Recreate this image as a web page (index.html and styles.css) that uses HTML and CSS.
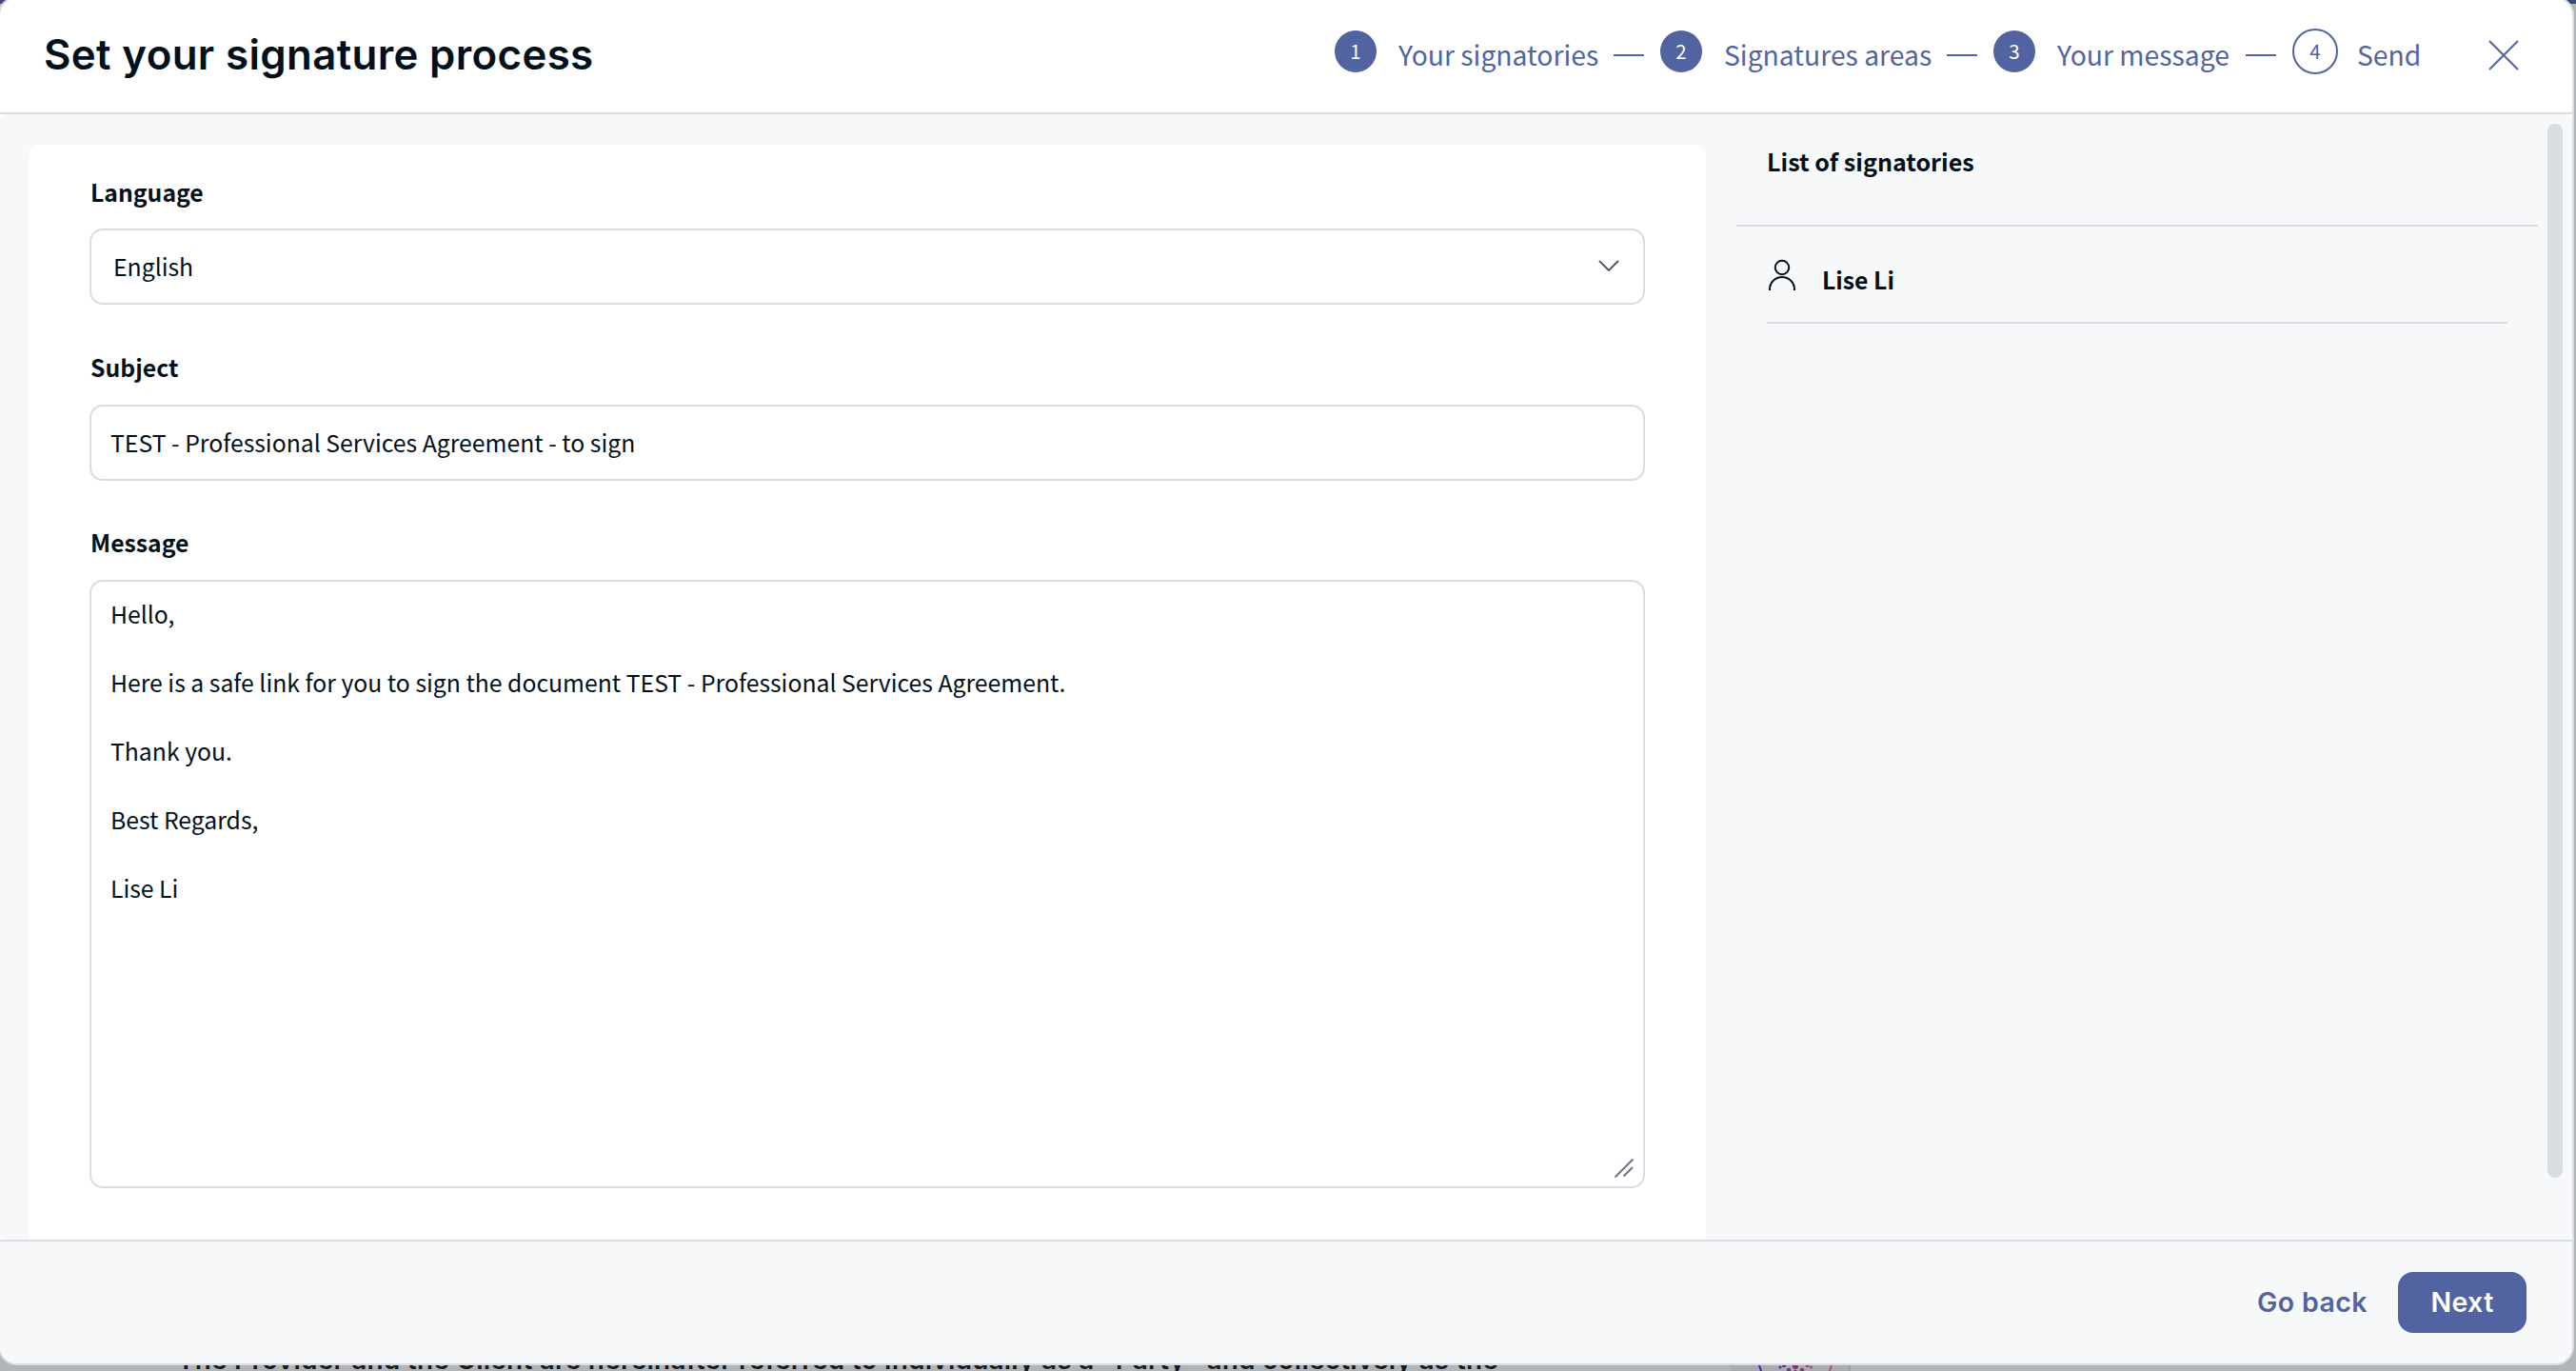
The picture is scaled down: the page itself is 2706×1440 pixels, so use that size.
FILE: index.html
```html
<!DOCTYPE html>
<html lang="en">
<head>
<meta charset="utf-8">
<title>Set your signature process</title>
<link rel="stylesheet" href="styles.css">
</head>
<body>
<div class="backdrop">
  <div class="topbar"></div>
  <p class="doc-text"><span>The Provider and the Client are hereinafter referred to individually as a "Party" and collectively as the</span></p>
  <svg class="doc-badge" width="126" height="6" viewBox="0 0 126 6">
    <rect width="126" height="6" fill="#a8acb0"/>
    <rect x="124" width="2" height="6" fill="#9b9fa8"/>
    <path d="M30 0l2 6" stroke="#5c12a6" stroke-width="2"/>
    <path d="M106 0l-2 6" stroke="#b5525c" stroke-width="2"/>
    <g fill="#86307c"><circle cx="52" cy="2" r="1.5" fill="#70208c"/><circle cx="56" cy="0" r="2.2" fill="#70208c"/><circle cx="61" cy="5" r="2.2"/><circle cx="68" cy="1" r="3"/><circle cx="68" cy="6" r="1.5"/><circle cx="75" cy="5" r="2.2"/><circle cx="80.500" cy="0" r="2.200" fill="#a5486a"/><circle cx="84.500" cy="2" r="1.500" fill="#a5486a"/></g>
  </svg>
</div>
<main class="modal">
  <header class="header">
    <h1 class="title">Set your signature process</h1>
    <ol class="steps">
      <li class="step"><span class="num">1</span><span class="name n1">Your signatories</span></li>
      <li class="dash"></li>
      <li class="step"><span class="num">2</span><span class="name n2">Signatures areas</span></li>
      <li class="dash"></li>
      <li class="step"><span class="num">3</span><span class="name n3">Your message</span></li>
      <li class="dash"></li>
      <li class="step"><span class="num open">4</span><span class="name n4">Send</span></li>
    </ol>
    <svg class="close" width="32" height="32" viewBox="0 0 32 32"><path d="M1 1l30 30M31 1L1 31" stroke="#5163a0" stroke-width="2" fill="none"/></svg>
  </header>
  <div class="content">
    <section class="card">
      <div class="field">
        <div class="label">Language</div>
        <div class="box select"><span>English</span>
          <svg width="22" height="14" viewBox="0 0 22 14"><path d="M1 2l10 10L21 2" stroke="#46525f" stroke-width="1.8" fill="none"/></svg>
        </div>
      </div>
      <div class="field">
        <div class="label">Subject</div>
        <div class="box"><span>TEST - Professional Services Agreement - to sign</span></div>
      </div>
      <div class="field">
        <div class="label">Message</div>
        <div class="box area">Hello,

Here is a safe link for you to sign the document TEST - Professional Services Agreement.

Thank you.

Best Regards,

Lise Li<svg class="grip" width="22" height="22" viewBox="0 0 22 22"><path d="M1.500 20.500l19-19M10.500 19.500l9.500-9.500" stroke="#6b7488" stroke-width="2" fill="none"/></svg></div>
      </div>
    </section>
    <aside class="side">
      <h2 class="side-title">List of signatories</h2>
      <div class="person">
        <svg width="30" height="34" viewBox="0 0 30 34"><g stroke="#02101a" stroke-width="2" fill="none"><circle cx="15" cy="9" r="7.200"/><path d="M2 33v-1a13 13 0 0 1 26 0v1"/></g></svg>
        <span>Lise Li</span>
      </div>
    </aside>
    <div class="scroll"></div>
  </div>
  <footer class="footer">
    <button class="back">Go back</button>
    <button class="next">Next</button>
  </footer>
</main>
</body>
</html>
```

FILE: styles.css
```css
* { box-sizing: border-box; }
body {
  margin: 0;
  width: 2706px;
  height: 1440px;
  overflow: hidden;
  position: relative;
  background: #b1b5b8;
  color: #02101a;
  font: 24.77px/36px "Noto Sans CJK SC", "Noto Sans", sans-serif;
}
h1, h2, p, ol { margin: 0; padding: 0; }
.backdrop { position: absolute; inset: 0; }
.topbar { height: 4px; background: #3c4876; }
.doc-text {
  position: absolute;
  left: 186px;
  top: 1408px;
  font: 600 28px/40px Inter, sans-serif;
  letter-spacing: 0.22px;
  white-space: nowrap;
  color: #14191d;
}
.doc-badge { position: absolute; left: 1818px; top: 1434px; }
.modal {
  position: absolute;
  left: -2px;
  top: -4px;
  width: 2706px;
  height: 1438px;
  border: 2px solid #d9dce1;
  border-radius: 20px;
  background: #fff;
  overflow: hidden;
  display: flex;
  flex-direction: column;
}
.header {
  height: 122px;
  flex: none;
  border-bottom: 2px solid #d9dce1;
  display: flex;
  align-items: flex-start;
  padding: 0 56px 0 46px;
}
.title {
  font: 600 43.8px/60px Inter, sans-serif;
  padding-top: 30px;
  letter-spacing: 0.36px;
  white-space: nowrap;
}
.steps {
  margin-left: auto;
  padding-top: 32px;
  list-style: none;
  display: flex;
  align-items: flex-start;
  color: #5163a0;
}
.step { display: flex; align-items: center; height: 48px; }
.num {
  width: 44px;
  height: 44px;
  border-radius: 50%;
  background: #5163a0;
  color: #fff;
  font-size: 20.5px;
  line-height: 42px;
  text-align: center;
}
.num.open {
  width: 48px;
  height: 48px;
  border: 2px solid #5163a0;
  background: none;
  color: #5163a0;
}
.name { font-size: 28.3px; line-height: 48px; margin-left: 23px; padding-top: 5px; white-space: nowrap; }
.n1 { width: 209px; }
.n2 { width: 217px; }
.n3 { width: 181px; }
.n4 { width: 65px; margin-left: 20px; }
.dash { width: 32px; height: 2px; background: #5163a0; margin: 27px 17px 0; }
.close { margin: 44px 0 0 73px; flex: none; }
.content {
  height: 1182px;
  flex: none;
  display: flex;
  background: #f7f8fa;
  border-radius: 8px;
  padding: 32px 10px 0 30px;
}
.card {
  width: 1762px;
  background: #fff;
  border-radius: 10px 10px 0 0;
  padding: 29px 64px 0;
  display: flex;
  flex-direction: column;
  gap: 45px;
}
.field:last-child { margin-top: -1px; }
.label { font-weight: 700; line-height: 41px; margin-bottom: 18px; padding-left: 1px; }
.field + .field .label { margin-bottom: 19px; }
.box {
  height: 80px;
  border: 2px solid #d9dce1;
  border-radius: 14px;
  padding: 0 20px 2px;
  display: flex;
  align-items: center;
  justify-content: space-between;
  white-space: pre;
}
.select { padding: 0 25px 2px 23px; }
.area { height: 639px; display: block; padding: 15px 20px; position: relative; }
.grip { position: absolute; right: 9px; bottom: 8px; }
.side { width: 842px; margin: -32px 0 0 32px; }
.side-title {
  font-size: 25.1px;
  line-height: 36px;
  height: 118px;
  padding: 31px 0 0 32px;
  border-bottom: 2px solid #d9dce1;
}
.person {
  margin: 0 32px;
  height: 102px;
  border-bottom: 2px solid #d9dce1;
  display: flex;
  align-items: flex-start;
  gap: 27px;
  padding-top: 34px;
  font-weight: 700;
}
.person svg { margin-left: 1px; }
.person span { padding-top: 3px; }
.scroll { width: 16px; height: 1107px; margin: -22px 0 0 10px; border-radius: 8px; background: #d9dce1; }
.footer {
  height: 130px;
  border-top: 2px solid #d9dce1;
  background: #f7f8fa;
  flex: 1;
  display: flex;
  justify-content: flex-end;
  align-items: flex-start;
  padding: 32px 48px 0;
}
button { border: 0; background: none; padding: 0; font: 600 28.5px/64px Inter, sans-serif; letter-spacing: 0.4px; color: #5163a0; }
.back { width: 116px; margin-right: 32px; white-space: nowrap; }
.next { width: 135px; height: 64px; border-radius: 16px; background: #5163a0; color: #fff; }
```
